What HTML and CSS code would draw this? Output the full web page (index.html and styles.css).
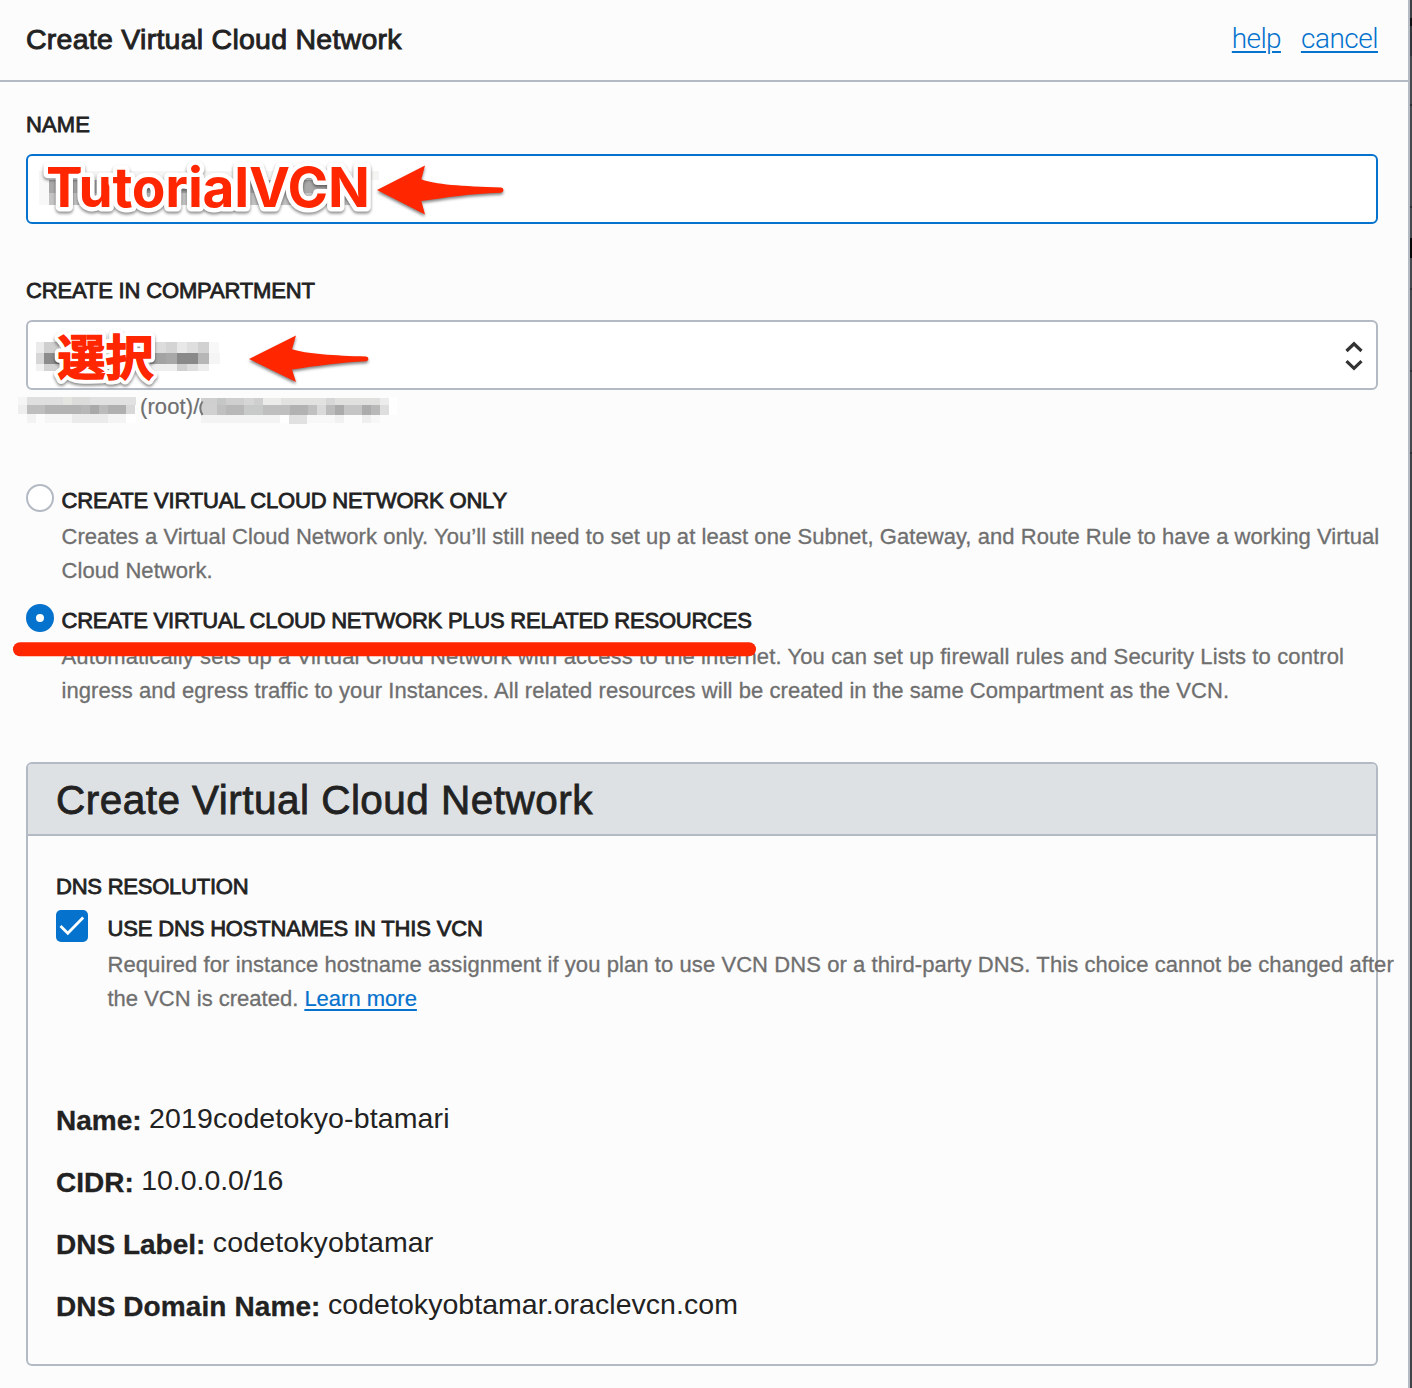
FILE: index.html
```html
<!DOCTYPE html>
<html lang="en">
<head>
<meta charset="utf-8">
<title>Create Virtual Cloud Network</title>
<link rel="stylesheet" href="styles.css">
</head>
<body>
<div class="page">
  <main class="panel">
    <header class="panel-header">
      <h1 class="panel-title">Create Virtual Cloud Network</h1>
      <nav class="panel-links"><a class="help" href="#">help</a><a class="cancel" href="#">cancel</a></nav>
    </header>
    <form class="form">
      <div class="label label-name">NAME</div>
      <div class="field field-focus"></div>
      <div class="label label-compartment">CREATE IN COMPARTMENT</div>
      <div class="field field-select">
        <svg class="chevrons" width="20" height="32" viewBox="0 0 20 32" fill="none" stroke="#333" stroke-width="3.2"><path d="M2.5 11L10 3.8L17.5 11M2.5 21.2L10 28.4L17.5 21.2"/></svg>
      </div>
      <div class="path">(root)/</div>

      <div class="option">
        <span class="radio"></span>
        <div class="option-body">
          <div class="label option-label">CREATE VIRTUAL CLOUD NETWORK ONLY</div>
          <p class="desc">Creates a Virtual Cloud Network only. You’ll still need to set up at least one Subnet, Gateway, and Route Rule to have a working Virtual<br>Cloud Network.</p>
        </div>
      </div>
      <div class="option">
        <span class="radio radio-on"></span>
        <div class="option-body">
          <div class="label option-label plus">CREATE VIRTUAL CLOUD NETWORK PLUS RELATED RESOURCES</div>
          <p class="desc"><span class="auto">Automatically sets up a Virtual Cloud Network with access to the internet. You can set up firewall rules and Security Lists to control</span><br>ingress and egress traffic to your Instances. All related resources will be created in the same Compartment as the VCN.</p>
        </div>
      </div>

      <section class="card">
        <h2 class="card-title">Create Virtual Cloud Network</h2>
        <div class="card-body">
          <div class="label dns-label">DNS RESOLUTION</div>
          <div class="check-row">
            <span class="checkbox"><svg width="32" height="32" viewBox="0 0 32 32" fill="none" stroke="#fff" stroke-width="2.8"><path d="M4.5 16L11.8 23.3L27.2 7.5"/></svg></span>
            <div class="check-body">
              <div class="label">USE DNS HOSTNAMES IN THIS VCN</div>
              <p class="desc"><span class="required">Required for instance hostname assignment if you plan to use VCN DNS or a third-party DNS. This choice cannot be changed after</span><br><span class="created">the VCN is created. <a href="#">Learn more</a></span></p>
            </div>
          </div>
          <dl class="facts">
            <div class="fact"><dt>Name:</dt><dd>2019codetokyo-btamari</dd></div>
            <div class="fact"><dt>CIDR:</dt><dd class="cidr">10.0.0.0/16</dd></div>
            <div class="fact"><dt>DNS Label:</dt><dd>codetokyobtamar</dd></div>
            <div class="fact"><dt class="domain">DNS Domain Name:</dt><dd class="host">codetokyobtamar.oraclevcn.com</dd></div>
          </dl>
        </div>
      </section>
    </form>
  </main>
  <div class="backdrop"></div>
</div>

<svg class="annotations" width="1412" height="720" viewBox="0 0 1412 720">
  <!-- pixelated value in the name field -->
  <g shape-rendering="crispEdges">
    <rect x="39" y="171" width="340" height="9" fill="#f5f5f3"/>
    <rect x="39" y="180" width="10" height="25" fill="#f8f8f8"/>
    <rect x="49" y="180" width="320" height="13" fill="#a9a9a9"/>
    <rect x="49" y="193" width="320" height="12" fill="#c4c4c4"/>
  </g>
  <!-- pixelated compartment value -->
  <g shape-rendering="crispEdges">
    <rect x="36" y="342" width="8" height="11" fill="#ebebeb"/><rect x="44" y="342" width="15" height="11" fill="#cfcfcf"/>
    <rect x="36" y="353" width="8" height="11" fill="#d6d6d6"/><rect x="44" y="353" width="15" height="11" fill="#8c8c8c"/>
    <rect x="36" y="364" width="8" height="7" fill="#f1f1f1"/><rect x="44" y="364" width="15" height="7" fill="#d3d3d3"/>
    <rect x="150" y="342" width="16" height="11" fill="#dcdcdc"/><rect x="166" y="342" width="11" height="11" fill="#d4d4d4"/><rect x="177" y="342" width="10" height="11" fill="#e8e8e8"/><rect x="187" y="342" width="11" height="11" fill="#dedede"/><rect x="198" y="342" width="11" height="11" fill="#d1d1d1"/><rect x="209" y="342" width="10" height="11" fill="#f8f8f8"/>
    <rect x="150" y="353" width="16" height="11" fill="#a3a3a3"/><rect x="166" y="353" width="11" height="11" fill="#a8a8a8"/><rect x="177" y="353" width="21" height="11" fill="#898989"/><rect x="198" y="353" width="11" height="11" fill="#b6b6b6"/><rect x="209" y="353" width="11" height="11" fill="#f5f5f5"/>
    <rect x="150" y="364" width="27" height="7" fill="#efefef"/><rect x="177" y="364" width="10" height="7" fill="#d0d0d0"/><rect x="187" y="364" width="11" height="7" fill="#dedede"/><rect x="198" y="364" width="11" height="7" fill="#ededed"/>
  </g>
  <!-- pixelated path segments around (root)/ -->
  <g shape-rendering="crispEdges">
    <rect x="18" y="397" width="9" height="8" fill="#f5f5f5"/><rect x="27" y="397" width="36" height="8" fill="#dfdfdf"/><rect x="63" y="397" width="9" height="8" fill="#e4e4e0"/><rect x="72" y="397" width="18" height="8" fill="#dcdcdb"/><rect x="90" y="397" width="46" height="8" fill="#e1e1e1"/>
    <rect x="18" y="405" width="9" height="9" fill="#eee"/><rect x="27" y="405" width="18" height="9" fill="#bebebe"/><rect x="45" y="405" width="36" height="9" fill="#b3b3b3"/><rect x="81" y="405" width="9" height="9" fill="#b7b7b7"/><rect x="90" y="405" width="9" height="9" fill="#a9a9a9"/><rect x="99" y="405" width="9" height="9" fill="#bbb"/><rect x="108" y="405" width="18" height="9" fill="#b0b0b0"/><rect x="126" y="405" width="9" height="9" fill="#d8d8d8"/>
    <rect x="27" y="414" width="9" height="9" fill="#f3f3f3"/><rect x="45" y="414" width="27" height="9" fill="#f6f6f6"/><rect x="72" y="414" width="36" height="9" fill="#ebebeb"/><rect x="108" y="414" width="18" height="9" fill="#f4f4f4"/><rect x="126" y="414" width="10" height="9" fill="#fff"/>
    <rect x="201" y="398" width="62" height="8" fill="#cfcfcf"/><rect x="217" y="398" width="9" height="8" fill="#c5c6c6"/><rect x="244" y="398" width="10" height="8" fill="#d6d6d6"/><rect x="263" y="398" width="18" height="8" fill="#ececea"/><rect x="281" y="398" width="45" height="8" fill="#e2e2e0"/><rect x="326" y="398" width="9" height="8" fill="#d7d7d7"/><rect x="335" y="398" width="45" height="8" fill="#e0e0df"/><rect x="380" y="398" width="9" height="8" fill="#ececec"/>
    <rect x="201" y="405" width="16" height="10" fill="#d0d0d0"/><rect x="217" y="405" width="9" height="10" fill="#c0c0c0"/><rect x="226" y="405" width="18" height="10" fill="#b8b8b8"/><rect x="244" y="405" width="19" height="10" fill="#c8c9c9"/><rect x="263" y="405" width="27" height="10" fill="#bfbfbf"/><rect x="290" y="405" width="18" height="10" fill="#b2b2b2"/><rect x="308" y="405" width="9" height="10" fill="#c0c0c0"/><rect x="317" y="405" width="9" height="10" fill="#dadada"/><rect x="326" y="405" width="9" height="10" fill="#bcbcbc"/><rect x="335" y="405" width="9" height="10" fill="#ababab"/><rect x="344" y="405" width="18" height="10" fill="#c5c5c5"/><rect x="362" y="405" width="9" height="10" fill="#acacac"/><rect x="371" y="405" width="9" height="10" fill="#b8b8b8"/><rect x="380" y="405" width="9" height="10" fill="#dedede"/>
    <rect x="389" y="397" width="8" height="18" fill="#fff"/>
    <rect x="201" y="415" width="79" height="8" fill="#f3f3f3"/><rect x="280" y="415" width="9" height="8" fill="#fff"/><rect x="289" y="415" width="18" height="9" fill="#e1e1e1"/><rect x="307" y="415" width="28" height="8" fill="#f8f8f8"/><rect x="335" y="415" width="9" height="8" fill="#f1f1f1"/><rect x="362" y="415" width="9" height="8" fill="#efefef"/><rect x="371" y="415" width="9" height="8" fill="#f7f7f7"/>
  </g>
  <path d="M202.5 401.5Q198 408 202.5 415" fill="none" stroke="#777" stroke-width="2"/>
  <g class="callout">
    <text class="callout-latin" x="46" y="206.6" textLength="324" lengthAdjust="spacing">TutorialVCN</text>
    <text class="callout-jp" x="57.5" y="375">選択</text>
  </g>
  <text class="callout-jp callout-fill" x="57.5" y="375">選択</text>
  <g class="arrow">
    <path d="M377 190L425 165.5L421.3 179.3C434 184.5 462 186.5 501 187.4Q503.5 187.6 503.5 190Q503.5 192.4 501 192.7C470 193.6 446 197.5 421.3 201L425 214.5Z"/>
    <path d="M249 359L296 335.5L292 349.3C306 354 334 355.6 366 356.6Q368.4 356.8 368.4 359Q368.4 361 366 361.3C340 362.5 316 366 292 369.5L296 382Z"/>
  </g>
  <path class="underline" d="M20 649.3H749"/>
</svg>
</body>
</html>
```
FILE: styles.css
```css
* { box-sizing: border-box; }

body {
  margin: 0;
  height: 1388px;
  overflow: hidden;
  position: relative;
  background: #fcfcfc;
  color: #222;
  font-family: "Liberation Sans", Arial, sans-serif;
  font-size: 22px;
  line-height: 34px;
}

h1, h2, p, dl, dd { margin: 0; }
a { color: #0572ce; }

.page { display: flex; height: 1388px; }

.panel {
  flex: 1;
  min-width: 0;
  border-right: 2px solid #b3bac4;
}

.backdrop {
  width: 2px;
  background: linear-gradient(#3d4043 0 18px, #111 18px 26px, #33363a 26px 56px, #45494c 56px 104px, #2c2f31 104px 106px, #45494c 106px 206px, #2c2f31 206px 208px, #45494c 208px 238px, #080808 238px 258px, #45494c 258px 288px, #303335 288px 290px, #45494c 290px 370px, #303335 370px 372px, #45494c 372px 452px, #303335 452px 454px, #404446 454px);
}

.panel-header {
  display: flex;
  justify-content: space-between;
  align-items: center;
  height: 82px;
  padding: 0 30px 2px 26px;
  border-bottom: 2px solid #b3bac4;
}

.panel-title {
  font-size: 28.5px;
  font-weight: 400;
  letter-spacing: 0.26px;
  -webkit-text-stroke: 0.9px #222;
}

.panel-links {
  display: flex;
  gap: 20px;
  font-family: Roboto, sans-serif;
  font-size: 28px;
  font-weight: 300;
}

.panel-links a {
  text-decoration-thickness: 2px;
  text-underline-offset: 3px;
}

.help { letter-spacing: -0.65px; }
.cancel { letter-spacing: -0.5px; }

.form { padding: 26px 30px 0 26px; }

.label {
  white-space: nowrap;
  letter-spacing: -0.16px;
  -webkit-text-stroke: 0.8px #222;
}

.label-name { margin-bottom: 12px; letter-spacing: 0.1px; }
.label-compartment { margin: 50px 0 12px; }

.field {
  height: 70px;
  border: 2px solid #b3bac4;
  border-radius: 6px;
  background: #fff;
}

.field-focus { border-color: #0572ce; }

.field-select {
  display: flex;
  justify-content: flex-end;
  align-items: center;
  padding: 1px 12px 0 0;
}

.path {
  padding-left: 114px;
  margin-bottom: 60px;
  color: #6f6f6f;
  letter-spacing: 0.1px;
  -webkit-text-stroke: 0.2px #6f6f6f;
}

.option {
  display: flex;
  gap: 7.5px;
  margin-bottom: 16px;
}

.radio {
  flex: none;
  width: 28px;
  height: 28px;
  border: 2px solid #b3bac4;
  border-radius: 50%;
  background: #fff;
}

.radio-on { border: 10px solid #0572ce; }

.option-label { margin-bottom: 2px; letter-spacing: -0.18px; }
.plus { letter-spacing: -0.235px; }

.desc {
  color: #6f6f6f;
  white-space: nowrap;
  letter-spacing: 0.053px;
  -webkit-text-stroke: 0.3px #6f6f6f;
}

.desc a { -webkit-text-stroke: 0.2px #0572ce; text-underline-offset: 3px; text-decoration-thickness: 2px; }
.auto { letter-spacing: 0.12px; }
.required { letter-spacing: 0.08px; }
.created { letter-spacing: 0; }

.card {
  height: 604px;
  margin-top: 54px;
  border: 2px solid #b3bac4;
  border-radius: 6px;
}

.card-title {
  height: 72px;
  padding: 3px 28px 0;
  border-bottom: 2px solid #b3bac4;
  border-radius: 4px 4px 0 0;
  background: #dee1e4;
  font-size: 40.5px;
  font-weight: 400;
  line-height: 66px;
  letter-spacing: 0.47px;
  -webkit-text-stroke: 0.8px #222;
}

.card-body { padding: 34px 28px 0; }
.dns-label { margin-bottom: 6px; letter-spacing: -0.23px; }

.check-row { display: flex; gap: 19.5px; }

.check-body .label { margin: 2px 0 2px; }

.checkbox {
  flex: none;
  width: 32px;
  height: 32px;
  border-radius: 5px;
  background: #0572ce;
}

.checkbox svg { display: block; }

.facts {
  margin-top: 74px;
  font-size: 28px;
  line-height: 62px;
}

.fact {
  display: flex;
  gap: 7.5px;
  height: 62px;
}

dt { font-weight: 700; -webkit-text-stroke: 0.3px #222; }
.domain { letter-spacing: 0.1px; }

dd {
  margin-top: -3px;
  font-size: 28.5px;
  letter-spacing: 0.13px;
}

.cidr { letter-spacing: -0.05px; }
.host { letter-spacing: 0.04px; }

.annotations {
  position: absolute;
  left: 0;
  top: 0;
  pointer-events: none;
}

.callout {
  fill: #ff2600;
  stroke: #fff;
  stroke-width: 9px;
  stroke-linejoin: round;
  paint-order: stroke;
  filter: drop-shadow(0 2px 1.5px rgba(0, 0, 0, 0.45));
}

.callout-latin {
  font-family: Inter, sans-serif;
  font-size: 55px;
  font-weight: 700;
}

.callout-jp {
  font-family: "Noto Sans CJK JP", sans-serif;
  font-size: 48px;
  font-weight: 700;
}

.callout-fill {
  fill: #ff2600;
  stroke: #ff2600;
  stroke-width: 1.3px;
}

.arrow {
  fill: #ff2600;
  filter: drop-shadow(0 2px 1.5px rgba(0, 0, 0, 0.5));
}

.underline {
  fill: none;
  stroke: #ff2600;
  stroke-width: 14px;
  stroke-linecap: round;
}
```
